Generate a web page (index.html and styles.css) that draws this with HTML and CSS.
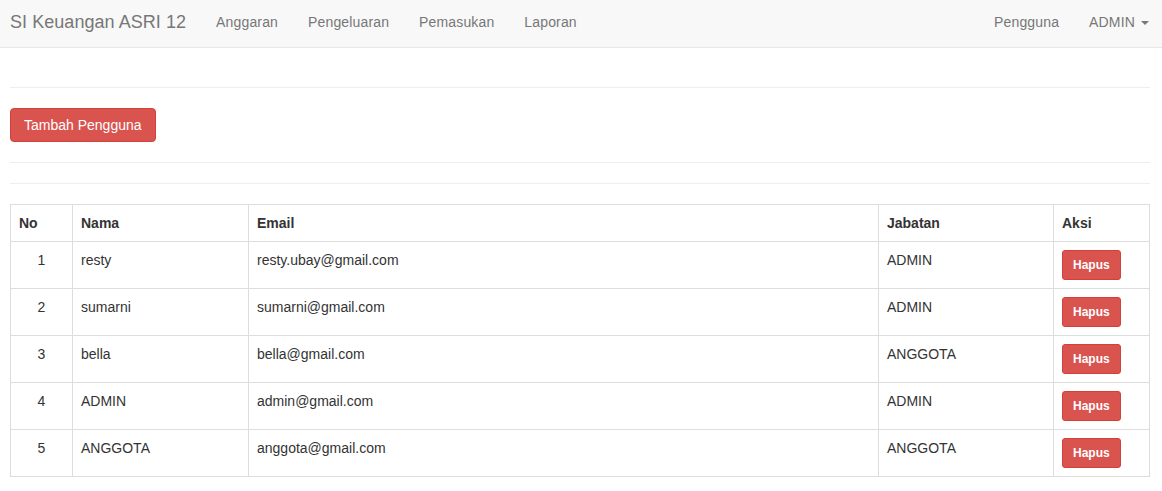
FILE: index.html
```html
<!DOCTYPE html>
<html lang="id">
<head>
<meta charset="utf-8">
<title>SI Keuangan ASRI 12</title>
<link rel="stylesheet" href="styles.css">
</head>
<body>
<nav class="navbar">
  <div class="nav-left">
    <a class="brand" href="#">SI Keuangan ASRI 12</a>
    <a class="nav-link" href="#">Anggaran</a>
    <a class="nav-link" href="#">Pengeluaran</a>
    <a class="nav-link" href="#">Pemasukan</a>
    <a class="nav-link" href="#">Laporan</a>
  </div>
  <div class="nav-right">
    <a class="nav-link" href="#">Pengguna</a>
    <a class="nav-link" href="#">ADMIN <span class="caret"></span></a>
  </div>
</nav>
<main class="content">
  <hr>
  <button class="btn btn-danger">Tambah Pengguna</button>
  <hr>
  <hr>
  <table class="table">
    <thead>
      <tr>
        <th class="col-no">No</th>
        <th class="col-nama">Nama</th>
        <th class="col-email">Email</th>
        <th class="col-jabatan">Jabatan</th>
        <th class="col-aksi">Aksi</th>
      </tr>
    </thead>
    <tbody>
      <tr><td class="num">1</td><td>resty</td><td>resty.ubay@gmail.com</td><td>ADMIN</td><td><button class="btn btn-danger btn-sm">Hapus</button></td></tr>
      <tr><td class="num">2</td><td>sumarni</td><td>sumarni@gmail.com</td><td>ADMIN</td><td><button class="btn btn-danger btn-sm">Hapus</button></td></tr>
      <tr><td class="num">3</td><td>bella</td><td>bella@gmail.com</td><td>ANGGOTA</td><td><button class="btn btn-danger btn-sm">Hapus</button></td></tr>
      <tr><td class="num">4</td><td>ADMIN</td><td>admin@gmail.com</td><td>ADMIN</td><td><button class="btn btn-danger btn-sm">Hapus</button></td></tr>
      <tr><td class="num">5</td><td>ANGGOTA</td><td>anggota@gmail.com</td><td>ANGGOTA</td><td><button class="btn btn-danger btn-sm">Hapus</button></td></tr>
    </tbody>
  </table>
</main>
</body>
</html>
```
FILE: styles.css
```css
* { box-sizing: border-box; }
html, body { margin: 0; padding: 0; }
body {
  font-family: "Liberation Sans", Arial, Helvetica, sans-serif;
  font-size: 14px;
  line-height: 20px;
  color: #333;
  background: #fff;
}
a { text-decoration: none; }

.navbar {
  display: flex;
  justify-content: space-between;
  height: 48px;
  background: #f8f8f8;
  border-bottom: 1px solid #e7e7e7;
}
.nav-left, .nav-right { display: flex; }
.brand {
  font-size: 18px;
  line-height: 20px;
  color: #777;
  padding: 12px 15px 15px 10px;
  letter-spacing: 0.05px;
}
.nav-link {
  color: #777;
  padding: 12px 15px 15px 15px;
  line-height: 20px;
  letter-spacing: 0.15px;
}
.nav-right .nav-link:last-child { padding-right: 13px; }
.caret {
  display: inline-block;
  width: 0;
  height: 0;
  margin-left: 2px;
  vertical-align: middle;
  border-top: 4px solid #777;
  border-left: 4px solid transparent;
  border-right: 4px solid transparent;
}

.content { padding: 19px 12px 0 10px; }
hr {
  margin: 20px 0;
  border: 0;
  border-top: 1px solid #eee;
  height: 0;
}

.btn {
  display: inline-block;
  font-family: inherit;
  font-size: 14px;
  line-height: 20px;
  padding: 6px 13px;
  border: 1px solid transparent;
  border-radius: 4px;
  cursor: pointer;
  vertical-align: middle;
}
.btn-danger {
  color: #fff;
  background: #d9534f;
  border-color: #d43f3a;
}
.btn-sm {
  font-size: 12px;
  line-height: 18px;
  padding: 5px 10px;
  border-radius: 3px;
  font-weight: bold;
}

.table {
  width: 100%;
  border-collapse: collapse;
  table-layout: fixed;
  border: 1px solid #ddd;
}
.table th, .table td {
  border: 1px solid #ddd;
  padding: 8px;
  text-align: left;
  vertical-align: top;
  line-height: 20px;
}
.table th { font-weight: bold; }
.table td.num { text-align: center; }
.col-no { width: 62px; }
.col-nama { width: 176px; }
.col-jabatan { width: 175px; }
.col-aksi { width: 96px; }
```
